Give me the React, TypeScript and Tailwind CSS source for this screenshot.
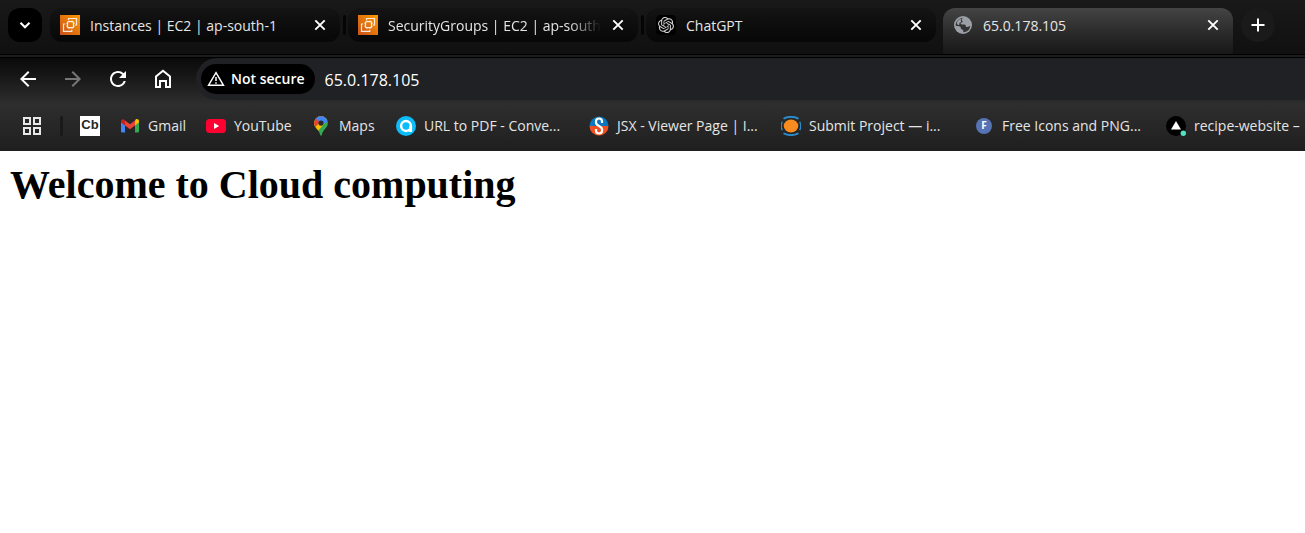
import { Fragment, type ReactNode } from "react";
import { SiOpenai } from "react-icons/si";
import { MdArrowBack, MdArrowForward, MdRefresh } from "react-icons/md";

function CloseIcon() {
  return (
    <svg viewBox="0 0 16 16" className="size-4" fill="none" stroke="#fff" strokeWidth="1.900" aria-hidden="true">
      <path d="M3.300 3.300l9.400 9.400M12.700 3.300l-9.400 9.400" />
    </svg>
  );
}

function PlusIcon() {
  return (
    <svg viewBox="0 0 20 20" className="size-5" fill="none" stroke="#fff" strokeWidth="2" aria-hidden="true">
      <path d="M10 3.500v13M3.500 10h13" />
    </svg>
  );
}

function ChevronIcon() {
  return (
    <svg viewBox="0 0 20 20" className="size-5" fill="none" stroke="#fff" strokeWidth="2.100" aria-hidden="true">
      <path d="M5.500 7.800l4.500 4.400 4.500-4.400" />
    </svg>
  );
}

function Ec2Icon() {
  return (
    <svg viewBox="0 0 20 20" className="size-5 shrink-0" aria-hidden="true">
      <defs>
        <linearGradient id="ec2" x1="0" y1="1" x2="1" y2="0">
          <stop offset="0" stopColor="#c8511b" />
          <stop offset="1" stopColor="#ff9900" />
        </linearGradient>
      </defs>
      <rect width="20" height="20" fill="url(#ec2)" />
      <g fill="none" stroke="#fff" strokeOpacity=".85">
        <rect x="7.5" y="6.7" width="6" height="6" rx="1" strokeWidth="1.3" />
        <path d="M8.500 5V3.500h8v6.300h-1.300M5.200 9H3.500v7.300h8.300v-1.600" strokeWidth="1.200" />
        <path d="M9 5.200v1.500M12 5.200v1.500M9 12.700v1.500M12 12.700v1.500M6 8.200h1.500M6 11.200h1.500M13.500 8.200H15M13.500 11.200H15" strokeWidth=".8" strokeOpacity=".6" />
      </g>
    </svg>
  );
}

function GlobeIcon() {
  return (
    <svg viewBox="0 0 18 18" className="size-[18px] shrink-0" aria-hidden="true">
      <circle cx="9" cy="9" r="9" fill="#9aa0a6" />
      <path
        d="M9.600 1.700C8 2 7.400 3.200 7.700 4.100c.3.800 1.100.9 1 1.700-.1.900-1.700.7-2 1.500-.2.700.3 1.100 1.200 1.100h2.300c1.300 0 1.700.8 1.600 1.700-.1.900.6 1.100 1.500 1 1.300-.1 1.400-1 3-1A7.400 7.400 0 0 1 9.300 16.300v-1.500c0-.9-.6-1.100-1.300-1.300-1-.3-1.300-1-1.300-1.900 0-.8-.5-1.200-1.400-1.300L1.700 9.700C1.600 5.500 4.700 2 9.600 1.700z"
        fill="#343434"
      />
      <path d="M3 6.300C3.900 4 5.700 2.900 7.200 2.500c-.6 1-.6 2 0 2.900.4.700-1.300.6-1.700 1.700-.4 1 .1 1.700-.7 1.900-1 .2-2.200-.9-1.800-2.700z" fill="#9aa0a6" />
    </svg>
  );
}

function HomeIcon() {
  return (
    <svg viewBox="0 0 24 24" className="size-6" fill="none" stroke="#fff" strokeWidth="2" aria-hidden="true">
      <path d="M5 20V9.500l7-5.700 7 5.700V20h-4v-6H9v6z" />
    </svg>
  );
}

function WarningIcon() {
  return (
    <svg viewBox="0 0 18 16" className="h-4 w-[18px]" fill="none" stroke="#fff" strokeWidth="1.500" aria-hidden="true">
      <path d="M9 1.700L16.400 14.200H1.600z" />
      <path d="M9 6v4M9 11.200v1.600" />
    </svg>
  );
}

function GmailIcon() {
  return (
    <svg viewBox="0 0 20 20" className="size-5 shrink-0" aria-hidden="true">
      <path d="M1 6v9.200c0 .8.6 1.400 1.400 1.400H5V9z" fill="#4285f4" />
      <path d="M15 9v7.600h2.700c.8 0 1.300-.6 1.300-1.400V6z" fill="#34a853" />
      <path d="M15 4.700V9.400l4-3V5.300c0-1.900-2-2.800-3.400-1.700z" fill="#fbbc04" />
      <path d="M5 9.400V4.500l5 3.800 5-3.800v4.900l-5 3.800z" fill="#ea4335" />
      <path d="M1 5.300v1.100l4 3V4.500l-.7-.8C2.900 2.600 1 3.500 1 5.300z" fill="#c5221f" />
    </svg>
  );
}

function YouTubeIcon() {
  return (
    <svg viewBox="0 0 20 20" className="size-5 shrink-0" aria-hidden="true">
      <rect y="3" width="20" height="14" rx="3.500" fill="#ff0033" />
      <path d="M8 7v6l5.200-3z" fill="#fff" />
    </svg>
  );
}

function MapsIcon() {
  return (
    <svg viewBox="0 0 20 20" className="size-5 shrink-0" aria-hidden="true">
      <defs>
        <clipPath id="pin">
          <path d="M10 .2a6.900 6.900 0 0 0-6.900 6.900c0 5.100 5.100 6.300 6.100 12 .2 1 1.400 1 1.600 0 1-5.700 6.100-6.900 6.100-12A6.900 6.900 0 0 0 10 .2z" />
        </clipPath>
      </defs>
      <g clipPath="url(#pin)">
        <path d="M0 0h20v20H0z" fill="#34a853" />
        <path d="M0 0h20L0 23z" fill="#fbbc04" />
        <path d="M0 0h14L2 14z" fill="#ea4335" />
        <path d="M4.700 2.600L10 7l7-5V0H4z" fill="#4285f4" />
        <path d="M12.200 0L18 5l-5.500 3-2.500-1z" fill="#4285f4" />
      </g>
      <circle cx="10" cy="7.100" r="2.600" fill="#2b2b2b" />
    </svg>
  );
}

function PdfIcon() {
  return (
    <svg viewBox="0 0 20 20" className="size-5 shrink-0" aria-hidden="true">
      <circle cx="10" cy="10" r="10" fill="#0bbcfa" />
      <circle cx="10" cy="10" r="4.900" fill="none" stroke="#fff" strokeWidth="2.500" />
      <path d="M13.600 10h2.500v6.100h-3.500z" fill="#fff" />
    </svg>
  );
}

function ViewerIcon() {
  return (
    <svg viewBox="0 0 20 20" className="size-5 shrink-0" aria-hidden="true">
      <path d="M.5 10a9.500 9.500 0 0 1 19 0z" fill="#0b77bd" />
      <path d="M.5 10a9.500 9.500 0 0 0 19 0z" fill="#f0501f" />
      <path d="M13 7V5.200C13 3.300 11.900 2.500 10 2.500S7 3.300 7 5.200v1.600C7 10 13 9.800 13 13v1.800c0 1.900-1.100 2.700-3 2.700s-3-.8-3-2.700V13" fill="none" stroke="#fff" strokeWidth="2.200" />
    </svg>
  );
}

function SubmitIcon() {
  return (
    <svg viewBox="0 0 20 20" className="size-5 shrink-0" aria-hidden="true">
      <ellipse cx="10" cy="10" rx="7.300" ry="6.500" fill="#f68b1f" />
      <g fill="none" stroke="#2a8fd0">
        <path d="M2.500 2.700C6.500.3 13.500.3 17.500 2.700M2.500 17.300c4 2.400 11 2.400 15 0" strokeWidth="1.900" />
        <path d="M1.300 5.800a9.300 9.300 0 0 0 0 8.400M18.700 5.800a9.300 9.300 0 0 1 0 8.400" strokeWidth="1.300" />
      </g>
    </svg>
  );
}

function RecipeIcon() {
  return (
    <svg viewBox="0 0 20 20" className="size-5 shrink-0" aria-hidden="true">
      <circle cx="10" cy="10" r="10" fill="#000" />
      <path d="M10 5l5 8.600H5z" fill="#fff" />
      <circle cx="17.300" cy="17.300" r="2.700" fill="#50e3c2" />
    </svg>
  );
}

function AppsIcon() {
  return (
    <svg viewBox="0 0 18 18" className="size-[18px]" fill="none" stroke="#e8e8e8" strokeWidth="2" aria-hidden="true">
      <path d="M1 1h6v6H1zM11 1h6v6h-6zM1 11h6v6H1zM11 11h6v6h-6z" />
    </svg>
  );
}

type Tab = { title: string; icon: ReactNode; active?: boolean; faded?: boolean };

const tabs: Tab[] = [
  { title: "Instances | EC2 | ap-south-1", icon: <Ec2Icon /> },
  { title: "SecurityGroups | EC2 | ap-south", icon: <Ec2Icon />, faded: true },
  {
    title: "ChatGPT",
    icon: (
      <span className="flex size-5 items-center justify-center rounded bg-black">
        <SiOpenai className="size-4 text-neutral-300" />
      </span>
    ),
  },
  { title: "65.0.178.105", icon: <GlobeIcon />, active: true },
];

type Bookmark = { title: string; icon: ReactNode; width: string };

const bookmarks: Bookmark[] = [
  { title: "Gmail", icon: <GmailIcon />, width: "w-[66px]" },
  { title: "YouTube", icon: <YouTubeIcon />, width: "w-[85px]" },
  { title: "Maps", icon: <MapsIcon />, width: "w-[65px]" },
  { title: "URL to PDF - Conve...", icon: <PdfIcon />, width: "w-[173px]" },
  { title: "JSX - Viewer Page | I...", icon: <ViewerIcon />, width: "w-[172px]" },
  { title: "Submit Project — i...", icon: <SubmitIcon />, width: "w-[173px]" },
  {
    title: "Free Icons and PNG...",
    icon: (
      <span className="flex size-5 items-center justify-center">
        <span className="flex size-4 items-center justify-center rounded-full bg-[#5573b5] text-[10px] font-bold text-white">F</span>
      </span>
    ),
    width: "w-[172px]",
  },
  { title: "recipe-website –", icon: <RecipeIcon />, width: "w-[173px]" },
];

function TabItem({ tab }: { tab: Tab }) {
  return (
    <li
      className={
        tab.active
          ? "flex h-[46px] w-[290px] shrink-0 items-start rounded-t-xl bg-linear-to-b from-[#444444] to-[#171717]"
          : "flex h-[34px] w-[290px] shrink-0 items-start rounded-xl bg-linear-to-b from-[#141414] to-[#070707]"
      }
    >
      <button className="flex h-[34px] min-w-0 flex-1 items-center gap-[10px] pl-[10px] text-left">
        <span className="flex w-5 shrink-0 justify-center">{tab.icon}</span>
        <span className={tab.faded ? "pt-px whitespace-nowrap mask-r-from-85%" : "pt-px whitespace-nowrap"}>
          {tab.title}
        </span>
      </button>
      <button aria-label={"Close " + tab.title} className="flex h-[34px] w-10 shrink-0 items-center justify-center">
        <CloseIcon />
      </button>
    </li>
  );
}

export default function App() {
  return (
    <div className="min-h-screen overflow-hidden bg-white font-['Open_Sans','Noto_Sans',sans-serif] text-sm text-neutral-200">
      <header>
        <div className="flex h-[54px] items-start bg-linear-to-b from-[#191919] to-[#101010] pt-2 pl-2">
          <button aria-label="Search tabs" className="flex size-[34px] shrink-0 items-center justify-center rounded-xl bg-black">
            <ChevronIcon />
          </button>
          <ul className="flex pl-2">
            {tabs.map((tab, i) => (
              <Fragment key={tab.title}>
                {i > 0 && (
                  <li aria-hidden="true" className={tab.active ? "w-[7px] shrink-0" : "flex h-[34px] w-2 shrink-0 items-center justify-center"}>
                    {!tab.active && <span className="h-5 w-[3px] rounded bg-[#050505]" />}
                  </li>
                )}
                <TabItem tab={tab} />
              </Fragment>
            ))}
          </ul>
          <button aria-label="New tab" className="ml-2 flex size-[34px] shrink-0 items-center justify-center rounded-full bg-[#1a1a1a]">
            <PlusIcon />
          </button>
        </div>
        <div className="h-1 border-y border-black bg-[#1c1c1c]" />
        <div className="bg-linear-to-b from-[#0a0a0a] via-[#2e2e2e] via-50% to-[#1f1f1f]">
          <div className="flex h-[42px] items-center pl-4">
            <nav className="flex w-[180px] shrink-0 gap-[21px]">
              <button aria-label="Back"><MdArrowBack className="size-6 text-white" /></button>
              <button aria-label="Forward"><MdArrowForward className="size-6 text-[#777777]" /></button>
              <button aria-label="Reload"><MdRefresh className="size-6 text-white" /></button>
              <button aria-label="Home"><HomeIcon /></button>
            </nav>
            <div className="flex h-full min-w-0 flex-1 items-center rounded-l-full bg-[#202124] pl-[5px]">
              <button className="flex h-[30px] shrink-0 items-center gap-[6px] rounded-full bg-black pr-[10px] pl-[6px] font-semibold text-white">
                <WarningIcon />
                Not secure
              </button>
              <input aria-label="Address" defaultValue="65.0.178.105" className="ml-[10px] min-w-0 flex-1 bg-transparent pt-px text-base text-white outline-none" />
            </div>
          </div>
          <div className="flex h-[51px] items-center pl-[23px]">
            <button aria-label="Apps" className="shrink-0"><AppsIcon /></button>
            <span className="ml-[19px] h-5 w-[3px] shrink-0 rounded bg-[#191919]" />
            <a href="#cb" className="ml-[17px] flex size-5 shrink-0 items-center justify-center bg-white font-['Liberation_Sans',sans-serif] text-[13px] font-bold text-neutral-800">Cb</a>
            <ul className="ml-5 flex gap-5">
              {bookmarks.map((b) => (
                <li key={b.title} className={"shrink-0 " + b.width}>
                  <a href="#bookmark" className="flex items-center gap-2 whitespace-nowrap">
                    {b.icon}
                    {b.title}
                  </a>
                </li>
              ))}
            </ul>
          </div>
        </div>
      </header>
      <main className="px-[10px] pt-[11px]">
        <h1 className="font-['Liberation_Serif',serif] text-[40px] leading-[46px] font-bold text-black">Welcome to Cloud computing</h1>
      </main>
    </div>
  );
}
